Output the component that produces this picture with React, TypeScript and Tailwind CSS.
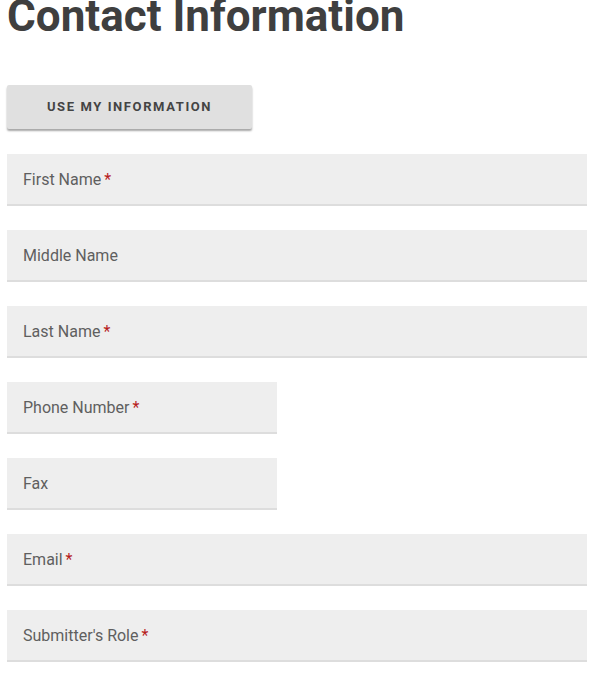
import React from "react";

type FieldProps = {
  label: string;
  required?: boolean;
  half?: boolean;
};

function Field({ label, required = false, half = false }: FieldProps) {
  return (
    <div
      className={`h-[52px] bg-[#eeeeee] border-b-2 border-[#dddddd] flex items-center px-4 pt-[2px] ${
        half ? "w-[270px]" : "w-[580px]"
      }`}
    >
      <span className="text-[16px] text-[#5f5f5f]">
        {label}
        {required && <span className="text-[#b71c1c] ml-[3px]">*</span>}
      </span>
    </div>
  );
}

export default function App() {
  return (
    <div
      className="min-h-screen bg-white px-[7px] overflow-hidden"
      style={{ fontFamily: "Roboto, 'Liberation Sans', sans-serif" }}
    >
      <h1 className="text-[44px] font-bold leading-none text-[#3f3f3f] -mt-[6px] mb-[-1px]">
        Contact Information
      </h1>
      <button className="mt-[48px] w-[245px] h-[44px] bg-[#e0e0e0] text-[#444] text-[13px] font-bold tracking-[1.6px] uppercase rounded-[2px] shadow-[0_2px_2px_rgba(0,0,0,0.35)]">
        Use my information
      </button>
      <div className="mt-[25px] flex flex-col gap-[24px]">
        <Field label="First Name" required />
        <Field label="Middle Name" />
        <Field label="Last Name" required />
        <Field label="Phone Number" required half />
        <Field label="Fax" half />
        <Field label="Email" required />
        <Field label="Submitter's Role" required />
      </div>
    </div>
  );
}
